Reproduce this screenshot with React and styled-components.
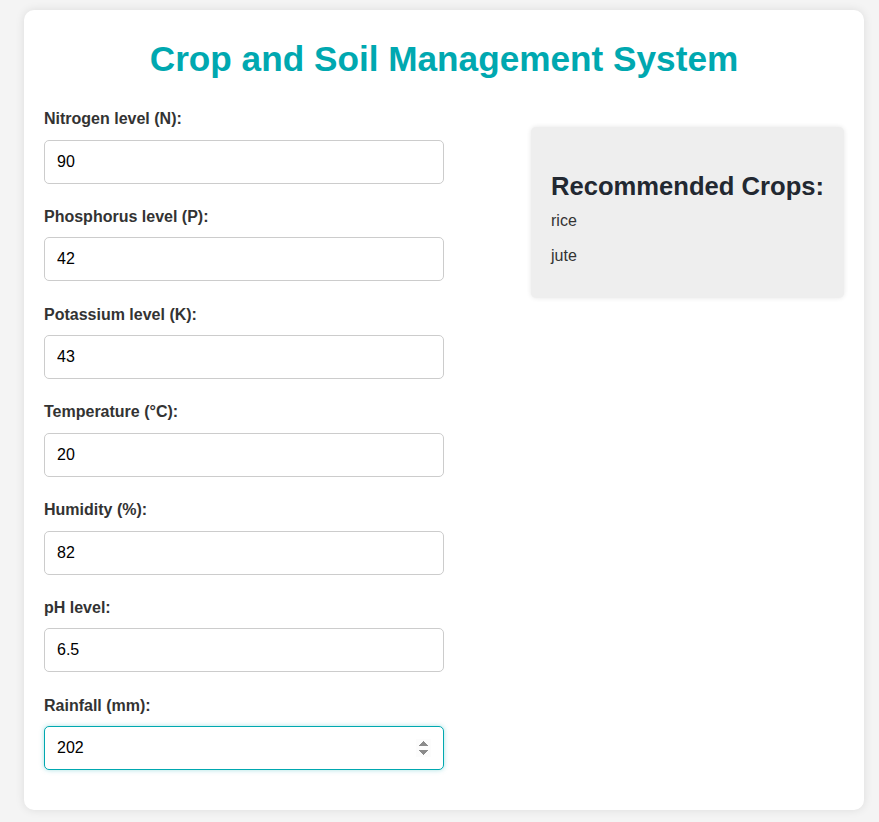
import styled, { createGlobalStyle } from 'styled-components';
import { useState } from 'react';

const GlobalStyle = createGlobalStyle`
    html, body {
        margin: 0;
        padding: 0;
        background: #f4f4f4;
        font-family: "Liberation Sans", Arial, sans-serif;
    }
    body {
        padding: 10px 15px 12px 24px;
    }
    * { box-sizing: border-box; }
`;

const fields = [
    { id: 'N', label: 'Nitrogen level (N):', value: '90' },
    { id: 'P', label: 'Phosphorus level (P):', value: '42' },
    { id: 'K', label: 'Potassium level (K):', value: '43' },
    { id: 'temperature', label: 'Temperature (°C):', value: '20' },
    { id: 'humidity', label: 'Humidity (%):', value: '82' },
    { id: 'ph', label: 'pH level:', value: '6.5' },
    { id: 'rainfall', label: 'Rainfall (mm):', value: '202' },
];

function App() {
    const [form, setForm] = useState(
        Object.fromEntries(fields.map((f) => [f.id, f.value]))
    );
    const crops = ['rice', 'jute'];

    const handleForm = (e) => {
        setForm((prev) => ({ ...prev, [e.target.id]: e.target.value }));
    };

    return (
        <>
            <GlobalStyle />
            <Card>
                <Title>Crop and Soil Management System</Title>
                <Content>
                    <Form onSubmit={(e) => e.preventDefault()}>
                        {fields.map((f, i) => (
                            <Group key={f.id}>
                                <Label htmlFor={f.id}>{f.label}</Label>
                                <Input
                                    type="number"
                                    id={f.id}
                                    value={form[f.id]}
                                    onChange={handleForm}
                                    $active={i === fields.length - 1}
                                    autoFocus={i === fields.length - 1}
                                />
                            </Group>
                        ))}
                    </Form>
                    <Result>
                        <h2>Recommended Crops:</h2>
                        {crops.map((c) => (
                            <p key={c}>{c}</p>
                        ))}
                    </Result>
                </Content>
            </Card>
        </>
    );
}

export default App;

const Card = styled.div`
    width: 840px;
    background: #fff;
    border-radius: 10px;
    padding: 20px;
    box-shadow: 0 0 10px rgba(0, 0, 0, 0.1);
`;

const Title = styled.h1`
    margin: 9px 0 31px;
    text-align: center;
    color: #00a8b0;
    font-size: 35.2px;
    font-weight: 700;
`;

const Content = styled.div`
    display: flex;
    justify-content: space-between;
    align-items: flex-start;
`;

const Form = styled.form`
    width: 400px;
    display: flex;
    flex-direction: column;
    gap: 24.17px;
    padding-bottom: 20px;
`;

const Group = styled.div`
    display: flex;
    flex-direction: column;
`;

const Label = styled.label`
    font-size: 16px;
    font-weight: 700;
    color: #333;
    margin-bottom: 11.6px;
`;

const Input = styled.input`
    width: 100%;
    height: 44px;
    padding: 0 12px;
    font-family: "Liberation Sans", Arial, sans-serif;
    font-size: 16px;
    color: #000;
    border: 1px solid ${(p) => (p.$active ? '#00a8b0' : '#ccc')};
    border-radius: 5px;
    outline: none;
    background: #fff;
    box-shadow: ${(p) => (p.$active ? '0 0 5px rgba(0, 168, 176, 0.35)' : 'none')};
    &::-webkit-inner-spin-button,
    &::-webkit-outer-spin-button {
        opacity: ${(p) => (p.$active ? 1 : 0)};
    }
    &:focus {
        border-color: #00a8b0;
    }
`;

const Result = styled.div`
    width: 313px;
    margin-top: 17px;
    padding: 20px 20px 16px;
    background: #eee;
    border-radius: 5px;
    box-shadow: 0 0 5px rgba(0, 0, 0, 0.1);
    h2 {
        margin: 24.6px 0 11px;
        font-size: 25.6px;
        font-weight: 700;
        color: #222831;
        white-space: nowrap;
    }
    p {
        margin: 0 0 17.4px;
        font-size: 16px;
        color: #333;
    }
`;
